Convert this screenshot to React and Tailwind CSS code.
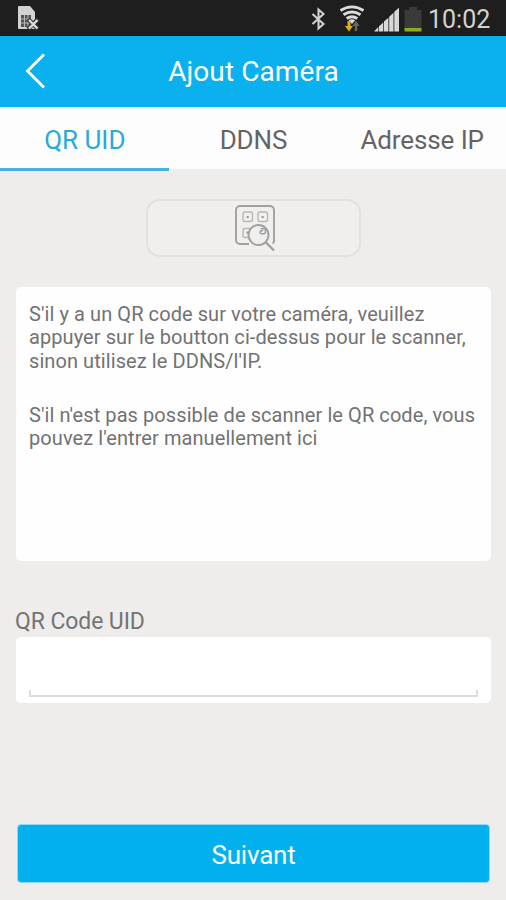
import clsx from 'clsx'

const tabs = [
  { label: 'QR UID', tracking: 'tracking-[0px]', active: true },
  { label: 'DDNS', tracking: 'tracking-[-0.1px]' },
  { label: 'Adresse IP', tracking: 'tracking-[-0.1px]' },
]

const help = [
  [
    "S'il y a un QR code sur votre caméra, veuillez",
    'appuyer sur le boutton ci-dessus pour le scanner,',
    "sinon utilisez le DDNS/l'IP.",
  ],
  [
    "S'il n'est pas possible de scanner le QR code, vous",
    "pouvez l'entrer manuellement ici",
  ],
]

function SimIcon() {
  return (
    <svg width="24" height="26" viewBox="0 0 24 26" fill="none">
      <path
        d="M2 1h11l5 6v17H2a1 1 0 0 1-1-1V2a1 1 0 0 1 1-1Z"
        fill="#d2d2d2"
      />
      <path d="M4 10h10v12H4Z" fill="#555" />
      <path
        d="M4 14h10M4 18h10M7.500 10v12M11 10v12"
        stroke="#b4b4b4"
        strokeWidth="1"
      />
      <path d="m11 14 10 10M21 14 11 24" stroke="#3a3a3a" strokeWidth="4.500" />
      <path d="m12 15 8.500 8.500M20.500 15 12 23.500" stroke="#ddd" strokeWidth="2.300" />
    </svg>
  )
}

function BluetoothIcon() {
  return (
    <svg width="16" height="24" viewBox="0 0 16 24" fill="none">
      <path
        d="m1.500 7 11 10-5 4.500V2.500l5 4.500-11 10"
        stroke="#d0d0d0"
        strokeWidth="2.100"
      />
    </svg>
  )
}

function WifiIcon() {
  return (
    <svg width="26" height="28" viewBox="0 0 26 28" fill="none">
      <g stroke="#dcdcdc" strokeWidth="2.900">
        <path d="M1.500 5.500Q13-1.800 24.500 5.500" />
        <path d="M4.500 9.700Q13 4.200 21.500 9.700" />
        <path d="M7.700 13.500Q13 9.800 18.300 13.500" />
      </g>
      <path d="M9.800 15.200q3.200-2 6.400 0L13 19Z" fill="#dcdcdc" />
      <path d="M8.500 16h3v5H14l-4 5.500L6 21h2.500Z" fill="#dcae18" />
      <path d="M15.800 26v-5h-2.300l3.500-5.300 3.500 5.300h-2.300v5Z" fill="#666" />
    </svg>
  )
}

function SignalIcon() {
  return (
    <svg width="26" height="25" viewBox="0 0 26 25">
      <path
        d="M0 24.500 4.300 20v4.500ZM5 19.300 9.300 15.500v9H5ZM10 14.500l4.400-3.800v13.800H10ZM15.200 9.700l4.300-3.900v18.700h-4.300ZM20.300 4.800l4.700-4v23.700h-4.700Z"
        fill="#d8d8d8"
      />
    </svg>
  )
}

function BatteryIcon() {
  return (
    <svg width="18" height="26" viewBox="0 0 18 26">
      <path d="M5 0h8v3h4.500v19H.5V3H5Z" fill="#3a3a3a" />
      <path d="M.5 21h17v3.500H.5Z" fill="#8baf16" />
    </svg>
  )
}

function ScanIcon() {
  return (
    <svg
      width="42"
      height="48"
      viewBox="0 0 42 48"
      fill="none"
      stroke="#a0a0a0"
    >
      <path
        d="M16 40H7a4 4 0 0 1-4-4V6a4 4 0 0 1 4-4h30a4 4 0 0 1 4 4v31q0 1.500-1.500 2.500"
        strokeWidth="1.900"
      />
      <g stroke="#b8b8b8" strokeWidth="1.400">
        <rect x="10" y="8" width="9.500" height="9.500" rx="2" />
        <rect x="25" y="8" width="9.500" height="9.500" rx="2" />
        <path d="M17 24.500h-5a2 2 0 0 0-2 2v5a2 2 0 0 0 2 2h3" />
      </g>
      <path
        d="M13.700 12h2v2h-2ZM28.700 12h2v2h-2ZM13.500 27.500H15v2h-1.500Z"
        fill="#999"
        stroke="none"
      />
      <circle cx="25.500" cy="31" r="10" fill="#f0efee" strokeWidth="1.900" />
      <path
        d="M27.500 24.800h3a2 2 0 0 1 2 2v1a2 2 0 0 1-2 2h-2a1.500 1.500 0 0 1 0-3h1.500"
        strokeWidth="1.500"
      />
      <path d="m33 38.500 8 8" strokeWidth="2.400" />
    </svg>
  )
}

function StatusBar() {
  return (
    <div className="flex h-9 shrink-0 items-start border-b border-[#0b1a22] bg-[#1e1e1e] pl-[17px]">
      <div className="mt-[5px]">
        <SimIcon />
      </div>
      <div className="mt-[7px] ml-[270px]">
        <BluetoothIcon />
      </div>
      <div className="mt-[5px] ml-[12px]">
        <WifiIcon />
      </div>
      <div className="mt-[7px] ml-[9px]">
        <SignalIcon />
      </div>
      <div className="mt-[7px] ml-[4px]">
        <BatteryIcon />
      </div>
      <span className="mt-[4px] ml-[6px] text-[25px] leading-[32px] tracking-[0px] text-[#d2d2d2]">
        10:02
      </span>
    </div>
  )
}

function Header() {
  return (
    <header className="grid h-[71px] shrink-0 grid-cols-[60px_1fr_60px] items-center bg-[#0bb0ee] text-white">
      <button type="button" aria-label="Retour" className="pb-[2px] pl-[25px]">
        <svg width="21" height="36" viewBox="0 0 21 36" fill="none">
          <path d="M19 1.500 2.500 18 19 34.500" stroke="#fff" strokeWidth="2.900" />
        </svg>
      </button>
      <h1 className="pt-px pl-px text-center text-[28px] leading-[34px] tracking-[0.1px]">
        Ajout Caméra
      </h1>
    </header>
  )
}

function Tabs() {
  return (
    <nav className="grid h-16 shrink-0 grid-cols-3">
      {tabs.map((tab) => (
        <button
          key={tab.label}
          type="button"
          className={clsx(
            'flex flex-col whitespace-nowrap text-[26px]',
            tab.active ? 'text-[#29a9dc]' : 'text-[#646464]',
          )}
        >
          <span
            className={clsx(
              'block w-full bg-[#fdfdfd] pl-px text-center leading-[67px]',
              tab.tracking,
              tab.active ? 'h-[61px]' : 'h-[62px]',
            )}
          >
            {tab.label}
          </span>
          {tab.active ? <span className="h-[3px] w-full bg-[#45b3dc]" /> : null}
        </button>
      ))}
    </nav>
  )
}

function App() {
  return (
    <div className="flex h-[900px] w-[506px] flex-col overflow-hidden bg-[#eeedec] font-[Roboto,sans-serif]">
      <StatusBar />
      <Header />
      <Tabs />
      <main className="flex flex-1 flex-col pr-[15px] pl-[16px]">
        <button
          type="button"
          aria-label="Scanner"
          className="mt-7 flex h-[58px] w-[215px] items-center justify-center self-center rounded-[14px] border-2 border-[#e2e1e0] bg-[#f0efee]"
        >
          <ScanIcon />
        </button>

        <section className="mt-[30px] h-[274px] rounded-[5px] bg-[#fefefe] pt-[16px] pl-[13px] text-[20px] leading-[23.300px] tracking-[0.080px] text-[#727272]">
          {help.map((lines) => (
            <p key={lines[0]} className="mb-[31px]">
              {lines.map((line) => (
                <span key={line} className="block whitespace-nowrap">
                  {line}
                </span>
              ))}
            </p>
          ))}
        </section>

        <label
          htmlFor="uid"
          className="mt-[46px] -ml-px text-[23px] leading-[30px] tracking-[-0.1px] text-[#747474]"
        >
          QR Code UID
        </label>
        <div className="flex h-[66px] flex-col justify-end rounded-[5px] bg-white px-[13px] pb-[6px]">
          <input id="uid" className="h-[40px] w-full outline-none" />
          <div className="h-[7px] w-full border-x-2 border-b-2 border-[#dcdcdc]" />
        </div>

        <button
          type="button"
          className="mx-px mt-[121px] h-[59px] rounded-[4px] border border-[#8fdaf6] bg-[#02b0ee] pt-[3px] text-[26px] leading-[54px] tracking-[-0.2px] text-white"
        >
          Suivant
        </button>
      </main>
    </div>
  )
}

export default App
